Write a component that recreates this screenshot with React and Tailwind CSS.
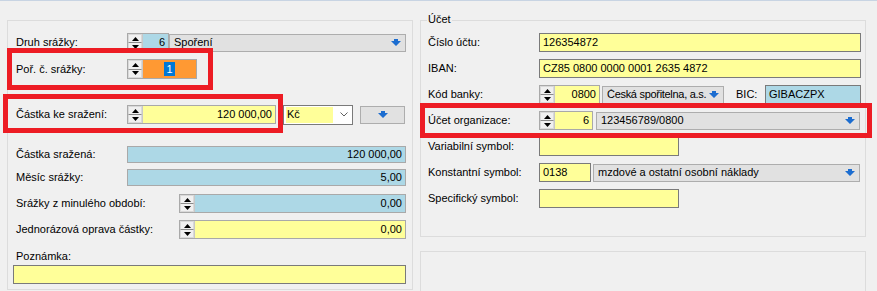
import React from "react";

const Arrow = () => (
    <svg width="10" height="7" viewBox="0 0 10 7" className="shrink-0">
        <path d="M3 0h4v2h3l-5 5l-5-5h3z" fill="#1c6dd0" />
    </svg>
)

const Spin = () => (
    <div className="w-[15px] h-full flex flex-col shrink-0 bg-[#f0f0f0] border-r border-[#c8c8c8]">
        <div className="flex-1 flex items-center justify-center border border-[#d9d9d9] border-b-[#8a8a8a]">
            <svg width="7" height="4" viewBox="0 0 7 4"><path d="M3.5 0L7 4H0z" fill="#000" /></svg>
        </div>
        <div className="flex-1 flex items-center justify-center border border-[#d9d9d9] border-t-0">
            <svg width="7" height="4" viewBox="0 0 7 4"><path d="M0 0h7L3.5 4z" fill="#000" /></svg>
        </div>
    </div>
)

const SpinField = ({ className, bg, children, align = 'justify-end' }) => (
    <div className={`flex h-full border border-[#a9a9a9] ${className}`}>
        <Spin />
        <div className={`flex-1 flex items-center px-[3px] ${bg} ${align}`}>{children}</div>
    </div>
)

const Field = ({ className, bg, border = 'border-[#a9a9a9]', children, right }) => (
    <div className={`flex items-center h-full border ${border} ${bg} px-[3px] ${right ? 'justify-end' : ''} ${className}`}>
        {children}
    </div>
)

const Drop = ({ className, text, tight }) => (
    <div className={`flex items-center h-[18px] bg-[#e1e1e1] border border-[#adadad] pl-[4px] pr-[4px] ${className}`}>
        <span className={`flex-1 min-w-0 overflow-hidden whitespace-nowrap ${tight ? 'tracking-[-0.3px]' : ''}`}>{text}</span>
        <Arrow />
    </div>
)

const Label = ({ w, children }) => (
    <span className={`${w} shrink-0 whitespace-nowrap`}>{children}</span>
)

export default function App() {
    return (
        <div className="relative w-[877px] h-[291px] overflow-hidden bg-[#f0f0f0] text-[11px] leading-none text-black font-['Liberation_Sans',Arial,sans-serif]">
            <div className="h-px bg-[#c8d4e3]" />
            <div className="flex mt-[19px]">
                {/* left panel */}
                <div className="ml-[7px] w-[406px] h-[270px] border border-[#dcdcdc] pl-[8px] pr-[6px] pt-[12px] flex flex-col">
                    <div className="flex items-center h-[19px]">
                        <Label w="w-[111px]">Druh srážky:</Label>
                        <SpinField className="w-[42px]" bg="bg-[#add8e6]">6</SpinField>
                        <Drop className="flex-1" text="Spoření" />
                    </div>
                    <div className="flex items-center h-[20px] mt-[7px]">
                        <Label w="w-[111px]">Poř. č. srážky:</Label>
                        <SpinField className="w-[70px]" bg="bg-[#ff9933]" align="justify-center">
                            <span className="bg-[#0078d7] text-white px-[2px] py-[1px] leading-[12px]">1</span>
                        </SpinField>
                    </div>
                    <div className="flex items-center h-[19px] mt-[26px]">
                        <Label w="w-[111px]">Částka ke sražení:</Label>
                        <SpinField className="w-[149px]" bg="bg-[#ffff99]">120 000,00</SpinField>
                        <div className="ml-[7px] w-[70px] h-[20px] flex items-center bg-white border border-[#7a7a7a] pl-[2px]">
                            <div className="w-[47px] h-[16px] bg-[#ffff99] flex items-center px-[1px]">Kč</div>
                            <svg width="8" height="5" viewBox="0 0 8 5" className="ml-[7px]">
                                <polyline points="0.5,0.5 4,4 7.5,0.5" fill="none" stroke="#606060" strokeWidth="1" />
                            </svg>
                        </div>
                        <div className="ml-[7px] w-[45px] h-[18px] flex items-center justify-center bg-[#e1e1e1] border border-[#adadad]">
                            <Arrow />
                        </div>
                    </div>
                    <div className="flex items-center h-[17px] mt-[22px]">
                        <Label w="w-[111px]">Částka sražená:</Label>
                        <Field className="flex-1" bg="bg-[#add8e6]" right>120 000,00</Field>
                    </div>
                    <div className="flex items-center h-[17px] mt-[6px]">
                        <Label w="w-[111px]">Měsíc srážky:</Label>
                        <Field className="flex-1" bg="bg-[#add8e6]" right>5,00</Field>
                    </div>
                    <div className="flex items-center h-[19px] mt-[8px]">
                        <Label w="w-[163px]">Srážky z minulého období:</Label>
                        <SpinField className="flex-1" bg="bg-[#add8e6]">0,00</SpinField>
                    </div>
                    <div className="flex items-center h-[19px] mt-[7px]">
                        <Label w="w-[163px]">Jednorázová oprava částky:</Label>
                        <SpinField className="flex-1" bg="bg-[#ffff99]">0,00</SpinField>
                    </div>
                    <div className="h-[14px] mt-[10px] flex items-center">Poznámka:</div>
                    <div className="h-[19px] mt-[2px] -ml-[3px]">
                        <Field bg="bg-[#ffff99]" border="border-[#7a7a7a]" />
                    </div>
                </div>

                {/* right column */}
                <div className="ml-[7px] w-[446px] flex flex-col">
                    <div className="relative h-[217px] border border-[#dcdcdc] pl-[7px] pr-[4px] pt-[12px] flex flex-col gap-[7px]">
                        <span className="absolute left-[6px] -top-[7px] px-[1px] bg-[#f0f0f0]">Účet</span>
                        <div className="flex items-center h-[19px]">
                            <Label w="w-[111px]">Číslo účtu:</Label>
                            <Field className="flex-1" bg="bg-[#ffff99]" border="border-[#7a7a7a]">126354872</Field>
                        </div>
                        <div className="flex items-center h-[19px]">
                            <Label w="w-[111px]">IBAN:</Label>
                            <Field className="flex-1" bg="bg-[#ffff99]" border="border-[#7a7a7a]">CZ85 0800 0000 0001 2635 4872</Field>
                        </div>
                        <div className="flex items-center h-[19px]">
                            <Label w="w-[111px]">Kód banky:</Label>
                            <SpinField className="w-[61px]" bg="bg-[#ffff99]">0800</SpinField>
                            <Drop className="ml-[2px] w-[122px]" text="Česká spořitelna, a.s." tight />
                            <Label w="ml-[12px] w-[29px]">BIC:</Label>
                            <Field className="flex-1" bg="bg-[#add8e6]" border="border-[#7a7a7a]">GIBACZPX</Field>
                        </div>
                        <div className="flex items-center h-[19px]">
                            <Label w="w-[111px]">Účet organizace:</Label>
                            <SpinField className="w-[54px]" bg="bg-[#ffff99]">6</SpinField>
                            <Drop className="ml-[3px] flex-1 mr-[1px]" text="123456789/0800" />
                        </div>
                        <div className="flex items-center h-[19px]">
                            <Label w="w-[111px]">Variabilní symbol:</Label>
                            <Field className="w-[140px]" bg="bg-[#ffff99]" border="border-[#7a7a7a]" />
                        </div>
                        <div className="flex items-center h-[19px]">
                            <Label w="w-[111px]">Konstantní symbol:</Label>
                            <Field className="w-[52px]" bg="bg-[#ffff99]" border="border-[#7a7a7a]">0138</Field>
                            <Drop className="ml-[2px] flex-1 mr-[1px]" text="mzdové a ostatní osobní náklady" />
                        </div>
                        <div className="flex items-center h-[19px]">
                            <Label w="w-[111px]">Specifický symbol:</Label>
                            <Field className="w-[140px]" bg="bg-[#ffff99]" border="border-[#7a7a7a]" />
                        </div>
                    </div>
                    <div className="mt-[14px] h-[60px] border border-[#dcdcdc]" />
                </div>
            </div>

            {/* red highlight annotations */}
            <div className="absolute left-[7px] top-[48px] w-[206px] h-[42px] border-[5px] border-[#ed1c24]" />
            <div className="absolute left-[3px] top-[94px] w-[280px] h-[39px] border-[5px] border-[#ed1c24]" />
            <div className="absolute left-[420px] top-[103px] w-[452px] h-[35px] border-[5px] border-[#ed1c24]" />
        </div>
    )
}
